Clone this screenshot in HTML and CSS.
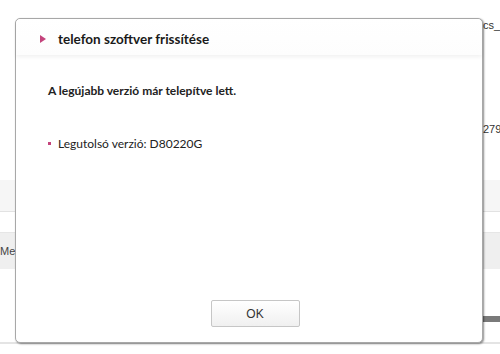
FILE: index.html
```html
<!DOCTYPE html>
<html lang="hu">
<head>
  <meta charset="UTF-8" />
  <title>Szoftver frissítés</title>
  <link rel="stylesheet" href="styles.css">
</head>
<body>
  <div class="page">
    <div class="top">
      <span class="side-text side-cs">cs_</span>
      <span class="side-text side-num">279</span>
    </div>
    <div class="band-light"></div>
    <div class="gap"></div>
    <div class="band-menu"><span class="menu-label">Menü</span></div>
    <div class="spacer"></div>
    <div class="bar-dark"></div>
    <div class="bottom"></div>
  </div>

  <div class="dialog">
    <div class="dialog-head">
      <span class="arrow"></span>
      <span class="title">telefon szoftver frissítése</span>
    </div>
    <div class="dialog-body">
      <p class="message">A legújabb verzió már telepítve lett.</p>
      <ul class="info">
        <li>Legutolsó verzió: D80220G</li>
      </ul>
    </div>
    <div class="dialog-foot">
      <button type="button">OK</button>
    </div>
  </div>
</body>
</html>
```

FILE: styles.css
```css
body {
  margin: 0;
  font-family: 'Lato', sans-serif;
  background-color: #ffffff;
  color: #222;
  width: 500px;
  height: 354px;
  overflow: hidden;
  position: relative;
}
.page {
  display: flex;
  flex-direction: column;
  height: 354px;
}
.top {
  height: 180px;
  position: relative;
}
.side-text {
  position: absolute;
  left: 483px;
  font-family: 'Liberation Sans', sans-serif;
  font-size: 11px;
  color: #333;
}
.side-cs {
  top: 19px;
}
.side-num {
  top: 123px;
}
.band-light {
  height: 31px;
  background-color: #f6f6f6;
  border-bottom: 1px solid #e2e2e2;
}
.gap {
  height: 20px;
}
.band-menu {
  height: 36px;
  background-color: #efefef;
  border-top: 1px solid #e6e6e6;
  display: flex;
  align-items: center;
}
.menu-label {
  font-family: 'Liberation Sans', sans-serif;
  font-size: 11px;
  color: #444;
  margin-left: 0;
}
.spacer {
  height: 47px;
}
.bar-dark {
  height: 6px;
  width: 20px;
  margin-left: auto;
  background-color: #7a7a7a;
}
.bottom {
  flex: 1;
  border-bottom: 2px solid #e4e4e4;
  margin-bottom: 10px;
}
.dialog {
  position: absolute;
  left: 15px;
  top: 18px;
  width: 466px;
  height: 323px;
  background-color: #ffffff;
  border: 1px solid #a8a8a8;
  border-radius: 5px;
  box-shadow: 1px 1px 2px rgba(0, 0, 0, 0.45);
  display: flex;
  flex-direction: column;
}
.dialog-head {
  height: 36px;
  display: flex;
  align-items: center;
  padding-left: 24px;
  padding-top: 3px;
  box-sizing: border-box;
  border-radius: 5px 5px 0 0;
  box-shadow: 0 2px 4px rgba(0, 0, 0, 0.06);
  background: linear-gradient(#ffffff, #fdfdfd);
}
.arrow {
  width: 0;
  height: 0;
  border-top: 4px solid transparent;
  border-bottom: 4px solid transparent;
  border-left: 6px solid #c4447c;
  margin-right: 12px;
}
.title {
  font-size: 13.5px;
  font-weight: bold;
  color: #1a1a1a;
}
.dialog-body {
  flex: 1;
  padding: 0 32px;
}
.message {
  margin: 28px 0 0;
  font-size: 12px;
  font-weight: bold;
  color: #222;
}
.info {
  list-style: none;
  margin: 38px 0 0;
  padding: 0;
  font-size: 12px;
  color: #222;
}
.info li {
  display: flex;
  align-items: center;
}
.info li::before {
  content: "";
  width: 3px;
  height: 3px;
  background-color: #c4447c;
  margin-right: 7px;
}
.dialog-foot {
  display: flex;
  justify-content: center;
  padding-bottom: 15px;
}
button {
  width: 89px;
  height: 27px;
  border: 1px solid #c6c6c6;
  border-radius: 2px;
  background: linear-gradient(#ffffff, #f0f0f0);
  font-family: 'Liberation Sans', sans-serif;
  font-size: 12px;
  color: #333;
  margin-left: 12px;
}
```
